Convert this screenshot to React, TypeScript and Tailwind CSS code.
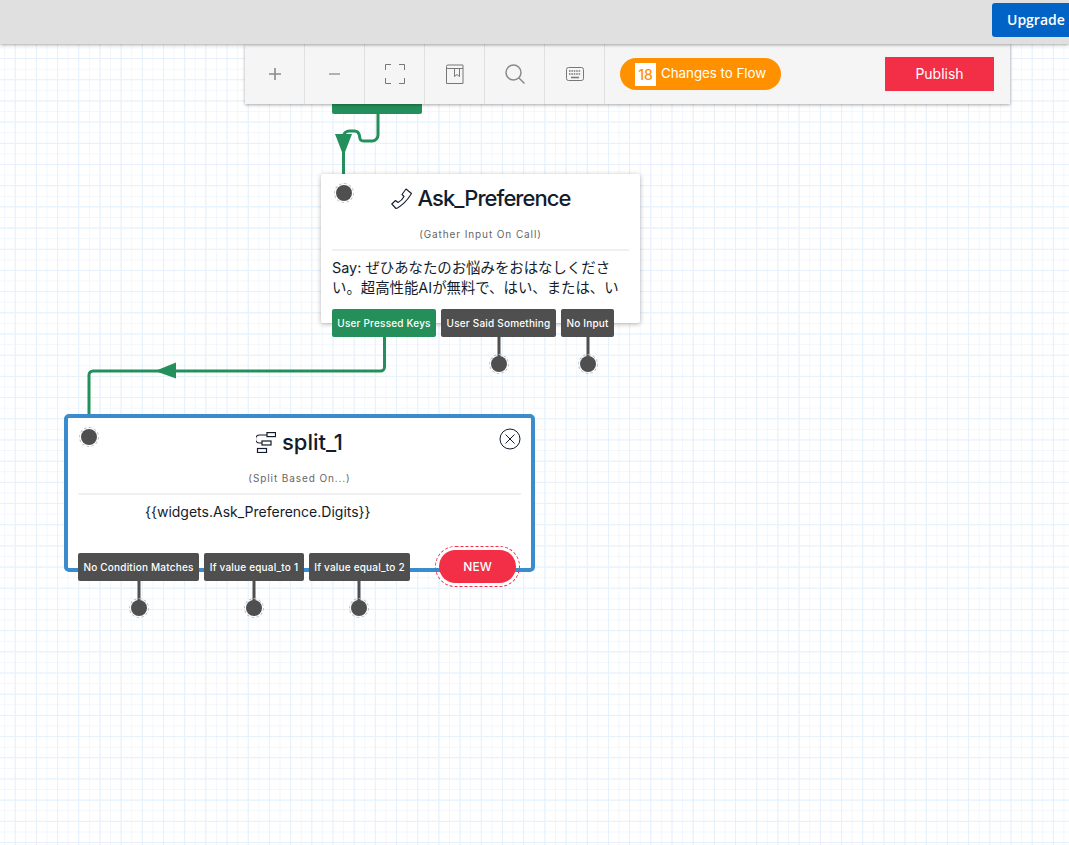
import { ReactNode } from "react";

const SANS = "font-['Inter','Noto_Sans_CJK_JP',sans-serif]";

function Port({ className }: { className: string }) {
  return (
    <span
      className={`absolute h-[20px] w-[20px] rounded-full border border-dashed border-[#bdbdbd] p-[1px] ${className}`}
    >
      <span className="block h-full w-full rounded-full bg-[#4f4f4f]" />
    </span>
  );
}

function ToolCell({ children }: { children: ReactNode }) {
  return (
    <div className="flex h-full w-[60px] items-center justify-center border-r border-[#e0e0e0] text-[#8a8a8a]">
      {children}
    </div>
  );
}

function Toolbar() {
  return (
    <div className="absolute left-[245px] top-0 flex h-[60px] w-[765px] items-center bg-[#f5f5f5] shadow-[0_1px_3px_rgba(0,0,0,0.35)]">
      <ToolCell>
        <svg width="12" height="12" viewBox="0 0 12 12" stroke="#8a8a8a" strokeWidth="1.6">
          <path d="M6 0v12M0 6h12" />
        </svg>
      </ToolCell>
      <ToolCell>
        <svg width="11" height="2" viewBox="0 0 11 2" stroke="#a0a0a0" strokeWidth="1.6">
          <path d="M0 1h11" />
        </svg>
      </ToolCell>
      <ToolCell>
        <svg width="20" height="20" viewBox="0 0 20 20" fill="none" stroke="#777" strokeWidth="1">
          <path d="M.5 6V.5H6M14 .5h5.500V6M19.500 14v5.500H14M6 19.500H.5V14" />
        </svg>
      </ToolCell>
      <ToolCell>
        <svg width="18" height="20" viewBox="0 0 18 20" fill="none" stroke="#777" strokeWidth="1">
          <path d="M.5 3v16.500h16.500V1H2A1.700 1.700 0 0 0 2 4.500h15" />
          <path d="M8.500 4.500v8l2.500-2 2.500 2v-8" />
        </svg>
      </ToolCell>
      <ToolCell>
        <svg width="20" height="20" viewBox="0 0 20 20" fill="none" stroke="#8a8a8a" strokeWidth="1.500">
          <circle cx="8.500" cy="8.500" r="7.500" />
          <path d="M14 14l5.500 5.500" />
        </svg>
      </ToolCell>
      <ToolCell>
        <svg width="18" height="14" viewBox="0 0 18 14" fill="none" stroke="#777" strokeWidth="1">
          <rect x=".5" y=".5" width="17" height="13" rx="2" />
          <path d="M3 4h12M3 7h12" strokeWidth="1.500" strokeDasharray="1.500 .9" />
          <path d="M5 10.500h8" strokeWidth="1.500" />
        </svg>
      </ToolCell>
      <div className="ml-[15px] flex h-[32px] w-[161px] items-center rounded-full bg-[#ff9100] pl-[15px] text-white">
        <span className="flex h-[23px] w-[21px] items-center justify-center bg-white text-[14px] font-medium text-[#ff9100]">
          18
        </span>
        <span className="ml-[5px] text-[13.3px]">Changes to Flow</span>
      </div>
      <button className="ml-[104px] h-[34px] w-[109px] bg-[#f22f46] pb-px text-[14px] text-white">
        Publish
      </button>
    </div>
  );
}

function Outlet({ label, color, width }: { label: string; color: string; width: string }) {
  return (
    <div
      className={`flex h-[28px] items-center justify-center whitespace-nowrap rounded-[2px] text-[10px] font-medium tracking-[0.2px] text-white ${color} ${width}`}
    >
      {label}
    </div>
  );
}

function AskNode() {
  return (
    <div className="absolute left-[321px] top-[130px] h-[149px] w-[319px] rounded-[2px] bg-white px-[11px] shadow-[0_1px_5px_rgba(0,0,0,0.3)]">
      <div className="mt-[10px] flex h-[28px] items-center justify-center gap-[6px] text-[#121c2d]">
        <svg width="21" height="21" viewBox="0 0 21 21" fill="none" stroke="#121c2d" strokeWidth="1.100" strokeLinejoin="round">
          <path d="M15 1l5.500 4.500-1 1.500C17 11 13 16 6.500 20L5 20.500.8 16l3.700-3.500 2.500 2C10 13 12 10.500 13 8.500l-2-2z" />
        </svg>
        <span className="text-[22px] font-medium leading-none tracking-[-0.95px]">Ask_Preference</span>
      </div>
      <p className="mt-[15px] text-center text-[10px] tracking-[0.9px] text-[#666]">(Gather Input On Call)</p>
      <div className="mt-[7px] h-[2px] bg-[#f0f0f0]" />
      <p className="mt-[7px] h-[40px] text-[14.4px] leading-[20px] text-[#121c2d] [text-spacing-trim:space-all]">
        Say: ぜひあなたのお悩みをおはなしください。超高性能AIが無料で、はい、または、い
      </p>
      <div className="mt-[11px] flex gap-[5px]">
        <Outlet label="User Pressed Keys" color="bg-[#248f5a]" width="w-[104px]" />
        <Outlet label="User Said Something" color="bg-[#4f4f4f]" width="w-[115px]" />
        <Outlet label="No Input" color="bg-[#4f4f4f]" width="w-[53px]" />
      </div>
    </div>
  );
}

function SplitNode() {
  return (
    <div className="absolute left-[64px] top-[370px] h-[158px] w-[471px] rounded-[5px] border-[4px] border-[#3a8ccc] bg-white px-[10px]">
      <div className="mt-[10px] flex h-[28px] items-center justify-center gap-[6px] text-[#121c2d]">
        <svg width="20" height="21" viewBox="0 0 20 21" fill="none" stroke="#121c2d" strokeWidth="1.200">
          <rect x="11" y=".6" width="8.500" height="4" />
          <rect x="6" y="9" width="9" height="4" />
          <rect x="1.500" y="16.500" width="9" height="4" />
          <path d="M11 3H3.500a4 4 0 0 0 0 8H6" />
        </svg>
        <span className="text-[22px] font-medium leading-none">split_1</span>
      </div>
      <p className="mt-[15px] text-center text-[10px] tracking-[0.9px] text-[#666]">(Split Based On...)</p>
      <div className="mt-[7px] h-[2px] bg-[#f0f0f0]" />
      <p className="ml-[67px] mt-[7px] text-[14px] leading-[20px] text-[#121c2d]">
        {"{{widgets.Ask_Preference.Digits}}"}
      </p>
      <div className="mt-[31px] flex gap-[5px]">
        <Outlet label="No Condition Matches" color="bg-[#4f4f4f]" width="w-[121px]" />
        <Outlet label="If value equal_to 1" color="bg-[#4f4f4f]" width="w-[100px]" />
        <Outlet label="If value equal_to 2" color="bg-[#4f4f4f]" width="w-[101px]" />
      </div>
      <svg className="absolute right-[10px] top-[10px]" width="22" height="22" viewBox="0 0 22 22" fill="none" stroke="#121c2d" strokeWidth="1">
        <circle cx="11" cy="11" r="10" />
        <path d="M6.500 6.500l9 9M15.500 6.500l-9 9" />
      </svg>
      <span className="absolute left-[367px] top-[128px] flex h-[41px] w-[85px] items-center justify-center rounded-full border border-dashed border-[#f22f46]">
        <span className="flex h-[33px] w-[77px] items-center justify-center rounded-full bg-[#f22f46] text-[12px] font-medium text-white">
          NEW
        </span>
      </span>
    </div>
  );
}

export default function App() {
  return (
    <div className={`flex h-[845px] w-[1069px] flex-col overflow-hidden bg-white ${SANS}`}>
      <header className="relative z-20 flex h-[44px] shrink-0 items-start justify-end bg-[#e0e0e0] pt-[3px] shadow-[0_1px_3px_rgba(0,0,0,0.35)]">
        <button className="h-[34px] w-[77px] rounded-l-[3px] bg-[#0263c6] pb-[2px] pl-[15px] text-left font-['Open_Sans',sans-serif] text-[14px] font-semibold text-white">
          Upgrade
        </button>
      </header>
      <main className="relative flex-1 bg-white bg-[linear-gradient(to_right,#e6f1fb_1px,transparent_1px),linear-gradient(to_bottom,#e6f1fb_1px,transparent_1px),linear-gradient(to_right,#f1f7fd_1px,transparent_1px),linear-gradient(to_bottom,#f1f7fd_1px,transparent_1px)] bg-[size:21.2px_21.2px,21.2px_21.2px,10.6px_10.6px,10.6px_10.6px] bg-[position:14.7px_14.1px,14.7px_14.1px,4.1px_3.5px,4.1px_3.5px]">
        <div className="absolute left-[332px] top-[40px] h-[30px] w-[90px] rounded-[2px] bg-[#248f5a]" />
        <svg className="absolute left-0 top-0" width="1069" height="801" fill="none" strokeWidth="3">
          <path d="M378 68v23a6 6 0 0 1-6 6h-8c-4 0-4-2-4.500-5s-2-5-5-5h-5c-3 0-6 2-6 5v43" stroke="#248f5a" />
          <path d="M335 90h17l-8.500 22z" fill="#248f5a" />
          <path d="M384.500 290v33a4 4 0 0 1-4 4H93a4 4 0 0 0-4 4v42" stroke="#248f5a" />
          <path d="M155 327l21-8.500v16z" fill="#248f5a" />
          <path d="M499 290v30M588 290v30M139 535v30M254 535v30M359 535v30" stroke="#4f4f4f" />
        </svg>
        <Toolbar />
        <AskNode />
        <SplitNode />
        <Port className="left-[334px] top-[139px]" />
        <Port className="left-[489px] top-[310px]" />
        <Port className="left-[578px] top-[310px]" />
        <Port className="left-[79px] top-[383px]" />
        <Port className="left-[129px] top-[554px]" />
        <Port className="left-[244px] top-[554px]" />
        <Port className="left-[349px] top-[554px]" />
      </main>
    </div>
  );
}
